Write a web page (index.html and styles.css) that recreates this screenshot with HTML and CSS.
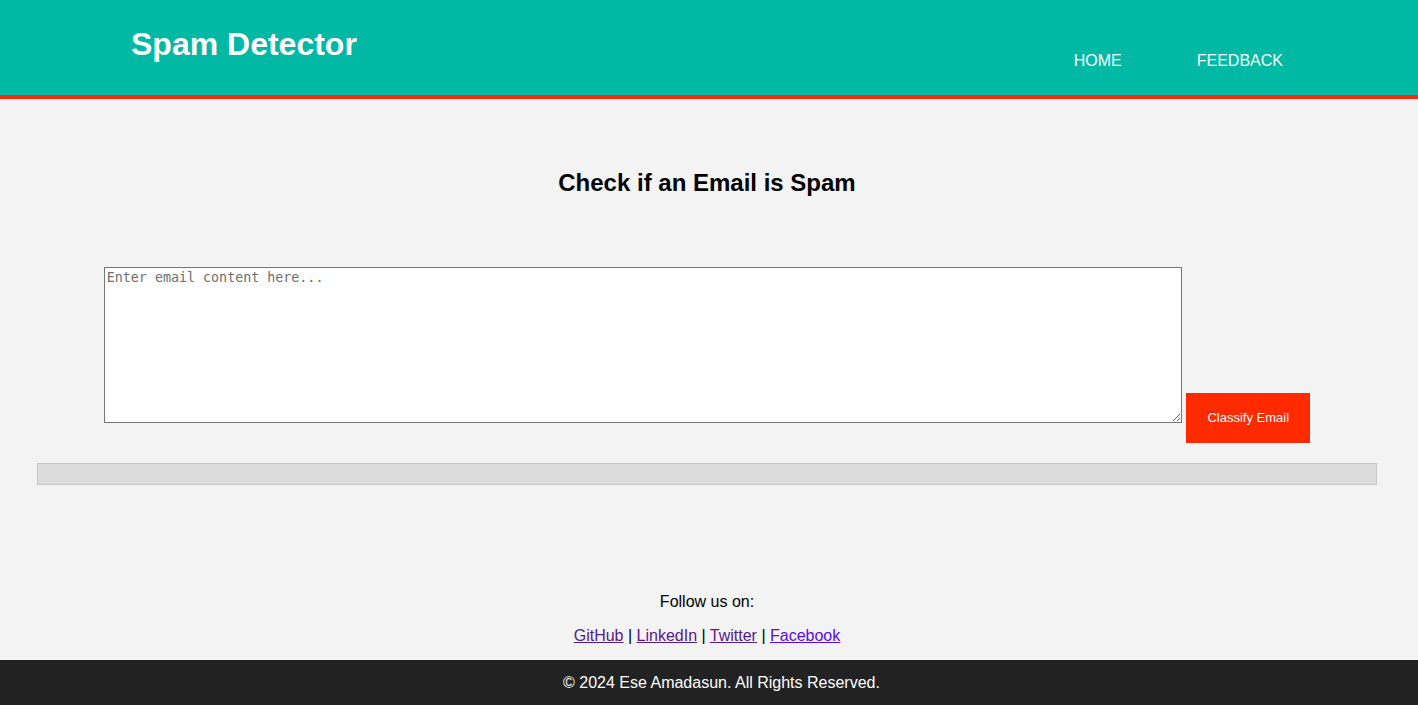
FILE: index.html
```html
<!DOCTYPE html>
<html lang="en">
<head>
<meta charset="utf-8">
<title>Spam Detector</title>
<link rel="stylesheet" href="styles.css">
</head>
<body>
<header class="site-header">
  <h1 class="logo">Spam Detector</h1>
  <nav class="nav">
    <a href="#" class="nav-link">HOME</a>
    <a href="#" class="nav-link">FEEDBACK</a>
  </nav>
</header>
<main class="main">
  <h2 class="title">Check if an Email is Spam</h2>
  <form class="form">
    <textarea class="email-input" placeholder="Enter email content here..."></textarea>
    <button type="button" class="classify-btn">Classify Email</button>
  </form>
  <div class="result"></div>
</main>
<section class="follow">
  <p class="follow-label">Follow us on:</p>
  <p class="follow-links"><a href="#" class="visited">GitHub</a> | <a href="#" class="visited">LinkedIn</a> | <a href="#" class="visited">Twitter</a> | <a href="#" class="fresh">Facebook</a></p>
</section>
<footer class="footer">© 2024 Ese Amadasun. All Rights Reserved.</footer>
</body>
</html>
```
FILE: styles.css
```css
* { box-sizing: border-box; }
body {
  margin: 0;
  background: #f3f3f3;
  font-family: "Liberation Sans", Arial, sans-serif;
  color: #000;
}
.site-header {
  height: 99px;
  background: #00b9a5;
  border-bottom: 4px solid #ff2a00;
  display: flex;
  justify-content: space-between;
  padding: 0 135px 0 131px;
}
.logo {
  margin: 0;
  padding-top: 26px;
  font-size: 32px;
  font-weight: bold;
  color: #fff;
  line-height: 37px;
}
.nav {
  display: flex;
  gap: 75px;
  padding-top: 52px;
}
.nav-link {
  color: #fff;
  text-decoration: none;
  font-size: 16px;
  line-height: 18px;
}
.main {
  padding: 70px 41px 0 37px;
}
.title {
  margin: 0;
  text-align: center;
  font-size: 24px;
  line-height: 28px;
}
.form {
  margin-top: 70px;
  text-align: center;
}
.email-input {
  width: 1078px;
  height: 156px;
  vertical-align: baseline;
  border: 1px solid #767676;
  background: #fff;
  font-family: "DejaVu Sans Mono", monospace;
  font-size: 13.333px;
  padding: 2px;
  margin: 0;
}
.email-input::placeholder { color: #6f6f6f; }
.classify-btn {
  width: 124px;
  height: 50px;
  margin: 0;
  border: none;
  background: #ff2a00;
  color: #fff;
  font-family: "Liberation Sans", Arial, sans-serif;
  font-size: 13px;
  vertical-align: 1px;
}
.result {
  margin-top: 20px;
  height: 22px;
  background: #dcdcdc;
  border: 1px solid #c8c8c8;
}
.follow {
  margin-top: 108px;
  text-align: center;
  font-size: 16px;
  padding-right: 4px;
}
.follow-label { margin: 0 0 16px; line-height: 18px; }
.follow-links { margin: 0; line-height: 18px; padding-bottom: 15px; }
.visited { color: #551a8b; }
.fresh { color: #5a0be8; }
.footer {
  background: #222;
  color: #fff;
  text-align: center;
  height: 45px;
  line-height: 45px;
  font-size: 16px;
  padding-left: 25px;
}
```
